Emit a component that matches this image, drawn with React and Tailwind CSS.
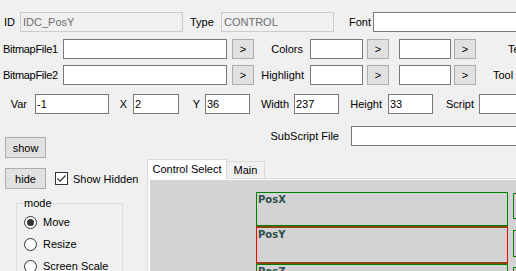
import React from 'react';

// WinForms-style property editor with a designer canvas below
const TextBox = ({ className = '', children }) => (
  <div className={`h-[20px] shrink-0 border border-[#7a7a7a] bg-white pl-[1px] flex items-center overflow-hidden whitespace-nowrap ${className}`}>
    {children}
  </div>
);

const ReadOnlyBox = ({ className = '', children }) => (
  <div className={`h-[20px] shrink-0 border border-[#cccccc] bg-[#f0f0f0] pl-[2px] flex items-center text-[#6d6d6d] overflow-hidden whitespace-nowrap ${className}`}>
    {children}
  </div>
);

const Btn = ({ className = '', children = '>' }) => (
  <div className={`h-[20px] shrink-0 border border-[#adadad] bg-[#e1e1e1] flex items-center justify-center ${className}`}>
    {children}
  </div>
);

const Label = ({ className = '', children }) => (
  <span className={`shrink-0 whitespace-nowrap ${className}`}>{children}</span>
);

const Radio = ({ checked, label }) => (
  <div className="flex items-center h-[22px]">
    <div className="ml-[7px] w-[13px] h-[13px] rounded-full border border-[#333333] bg-white flex items-center justify-center">
      {checked && <div className="w-[7px] h-[7px] rounded-full bg-[#333333]" />}
    </div>
    <span className="ml-[6px] whitespace-nowrap">{label}</span>
  </div>
);

const CanvasBox = ({ className = '', label }) => (
  <div className={`absolute ${className}`}>
    <span className="block pl-[1px] pt-[1px] text-[10px] leading-[12px] font-bold text-[#2f4f4f] font-[family-name:'DejaVu_Sans',sans-serif]">
      {label}
    </span>
  </div>
);

export default function App() {
  return (
    <div className="w-[516px] h-[271px] overflow-hidden bg-[#f0f0f0] text-[11px] leading-[14px] text-black font-[family-name:'Liberation_Sans',Arial,sans-serif]">
      {/* row 1 */}
      <div className="flex items-center h-[20px] mt-[12px]">
        <Label className="ml-[4px] w-[16px]">ID</Label>
        <ReadOnlyBox className="w-[163px]">IDC_PosY</ReadOnlyBox>
        <Label className="ml-[7px] w-[31px]">Type</Label>
        <ReadOnlyBox className="w-[113px]">CONTROL</ReadOnlyBox>
        <Label className="ml-[15px] w-[24px]">Font</Label>
        <TextBox className="w-[200px]" />
      </div>

      {/* row 2 */}
      <div className="flex items-center h-[20px] mt-[7px]">
        <Label className="ml-[3px] w-[60px] tracking-[-0.3px]">BitmapFile1</Label>
        <TextBox className="w-[164px]" />
        <Btn className="ml-[5px] w-[22px]" />
        <Label className="w-[56px] text-right pr-[7px]">Colors</Label>
        <TextBox className="w-[53px]" />
        <Btn className="ml-[4px] w-[22px]" />
        <TextBox className="ml-[10px] w-[52px]" />
        <Btn className="ml-[3px] w-[22px]" />
        <Label className="ml-[32px]">Text</Label>
      </div>

      {/* row 3 */}
      <div className="flex items-center h-[20px] mt-[6px]">
        <Label className="ml-[3px] w-[60px] tracking-[-0.3px]">BitmapFile2</Label>
        <TextBox className="w-[164px]" />
        <Btn className="ml-[5px] w-[22px]" />
        <Label className="w-[56px] text-right pr-[6px]">Highlight</Label>
        <TextBox className="w-[53px]" />
        <Btn className="ml-[4px] w-[22px]" />
        <TextBox className="ml-[10px] w-[52px]" />
        <Btn className="ml-[3px] w-[22px]" />
        <Label className="ml-[17px]">Tool</Label>
      </div>

      {/* row 4 */}
      <div className="flex items-center h-[20px] mt-[9px]">
        <Label className="w-[35px] text-right pr-[8px]">Var</Label>
        <TextBox className="w-[74px]">-1</TextBox>
        <Label className="w-[24px] text-right pr-[6px]">X</Label>
        <TextBox className="w-[46px]">2</TextBox>
        <Label className="w-[26px] text-right pr-[5px]">Y</Label>
        <TextBox className="w-[45px]">36</TextBox>
        <Label className="w-[44px] text-right pr-[5px]">Width</Label>
        <TextBox className="w-[45px]">237</TextBox>
        <Label className="w-[49px] text-right pr-[6px]">Height</Label>
        <TextBox className="w-[45px]">33</TextBox>
        <Label className="w-[46px] text-right pr-[5px]">Script</Label>
        <TextBox className="w-[80px]" />
      </div>

      <div className="flex">
        {/* left column */}
        <div className="w-[147px] shrink-0">
          <Btn className="mt-[23px] ml-[5px] w-[41px] h-[21px]">show</Btn>
          <div className="flex items-center mt-[10px]">
            <Btn className="ml-[5px] w-[41px] h-[21px]">hide</Btn>
            <div className="ml-[9px] w-[13px] h-[13px] border border-[#333333] bg-white">
              <svg width="11" height="11" viewBox="0 0 11 11">
                <path d="M1.5 5.5 L4.2 8.2 L9.5 2.5" fill="none" stroke="#333333" strokeWidth="1.2" />
              </svg>
            </div>
            <span className="ml-[5px] whitespace-nowrap">Show Hidden</span>
          </div>
          <div className="relative mt-[14px] ml-[16px] w-[107px] h-[90px] border border-[#dcdcdc] pt-[7px]">
            <span className="absolute left-[6px] top-[-8px] bg-[#f0f0f0] px-[1px]">mode</span>
            <Radio checked label="Move" />
            <Radio label="Resize" />
            <Radio label="Screen Scale" />
          </div>
        </div>

        {/* right column */}
        <div className="flex-1 min-w-0">
          <div className="flex items-center h-[20px] mt-[12px]">
            <Label className="w-[204px] text-right pr-[12px]">SubScript File</Label>
            <TextBox className="w-[200px]" />
          </div>

          <div className="relative z-10 flex items-end h-[19px] mt-[13px]">
            <div className="h-[20px] -mb-px w-[80px] bg-white border border-b-0 border-[#d9d9d9] flex items-center justify-center whitespace-nowrap pb-[2px]">
              Control Select
            </div>
            <div className="h-[17px] w-[38px] bg-[#f0f0f0] border-t border-r border-[#d9d9d9] flex items-center justify-center">
              Main
            </div>
          </div>

          <div className="border-t border-l border-[#d9d9d9] bg-white pl-[2px] pt-[1px]">
            <div className="relative h-[120px] bg-[#d3d3d3]">
              <CanvasBox className="left-[106px] top-[12px] w-[252px] h-[34px] border border-[#008000]" label="PosX" />
              <CanvasBox className="left-[106px] top-[46px] w-[252px] h-[38px] border-x border-x-[#ff0000] border-y-2 border-y-[#8b4513]" label="PosY" />
              <CanvasBox className="left-[106px] top-[84px] w-[252px] h-[34px] border border-[#008000]" label="PosZ" />
              <div className="absolute left-[363px] top-[13px] w-[60px] h-[26px] border border-[#008000]" />
              <div className="absolute left-[363px] top-[50px] w-[60px] h-[27px] border border-[#008000]" />
              <div className="absolute left-[363px] top-[87px] w-[60px] h-[30px] border border-[#008000]" />
            </div>
          </div>
        </div>
      </div>
    </div>
  );
}
